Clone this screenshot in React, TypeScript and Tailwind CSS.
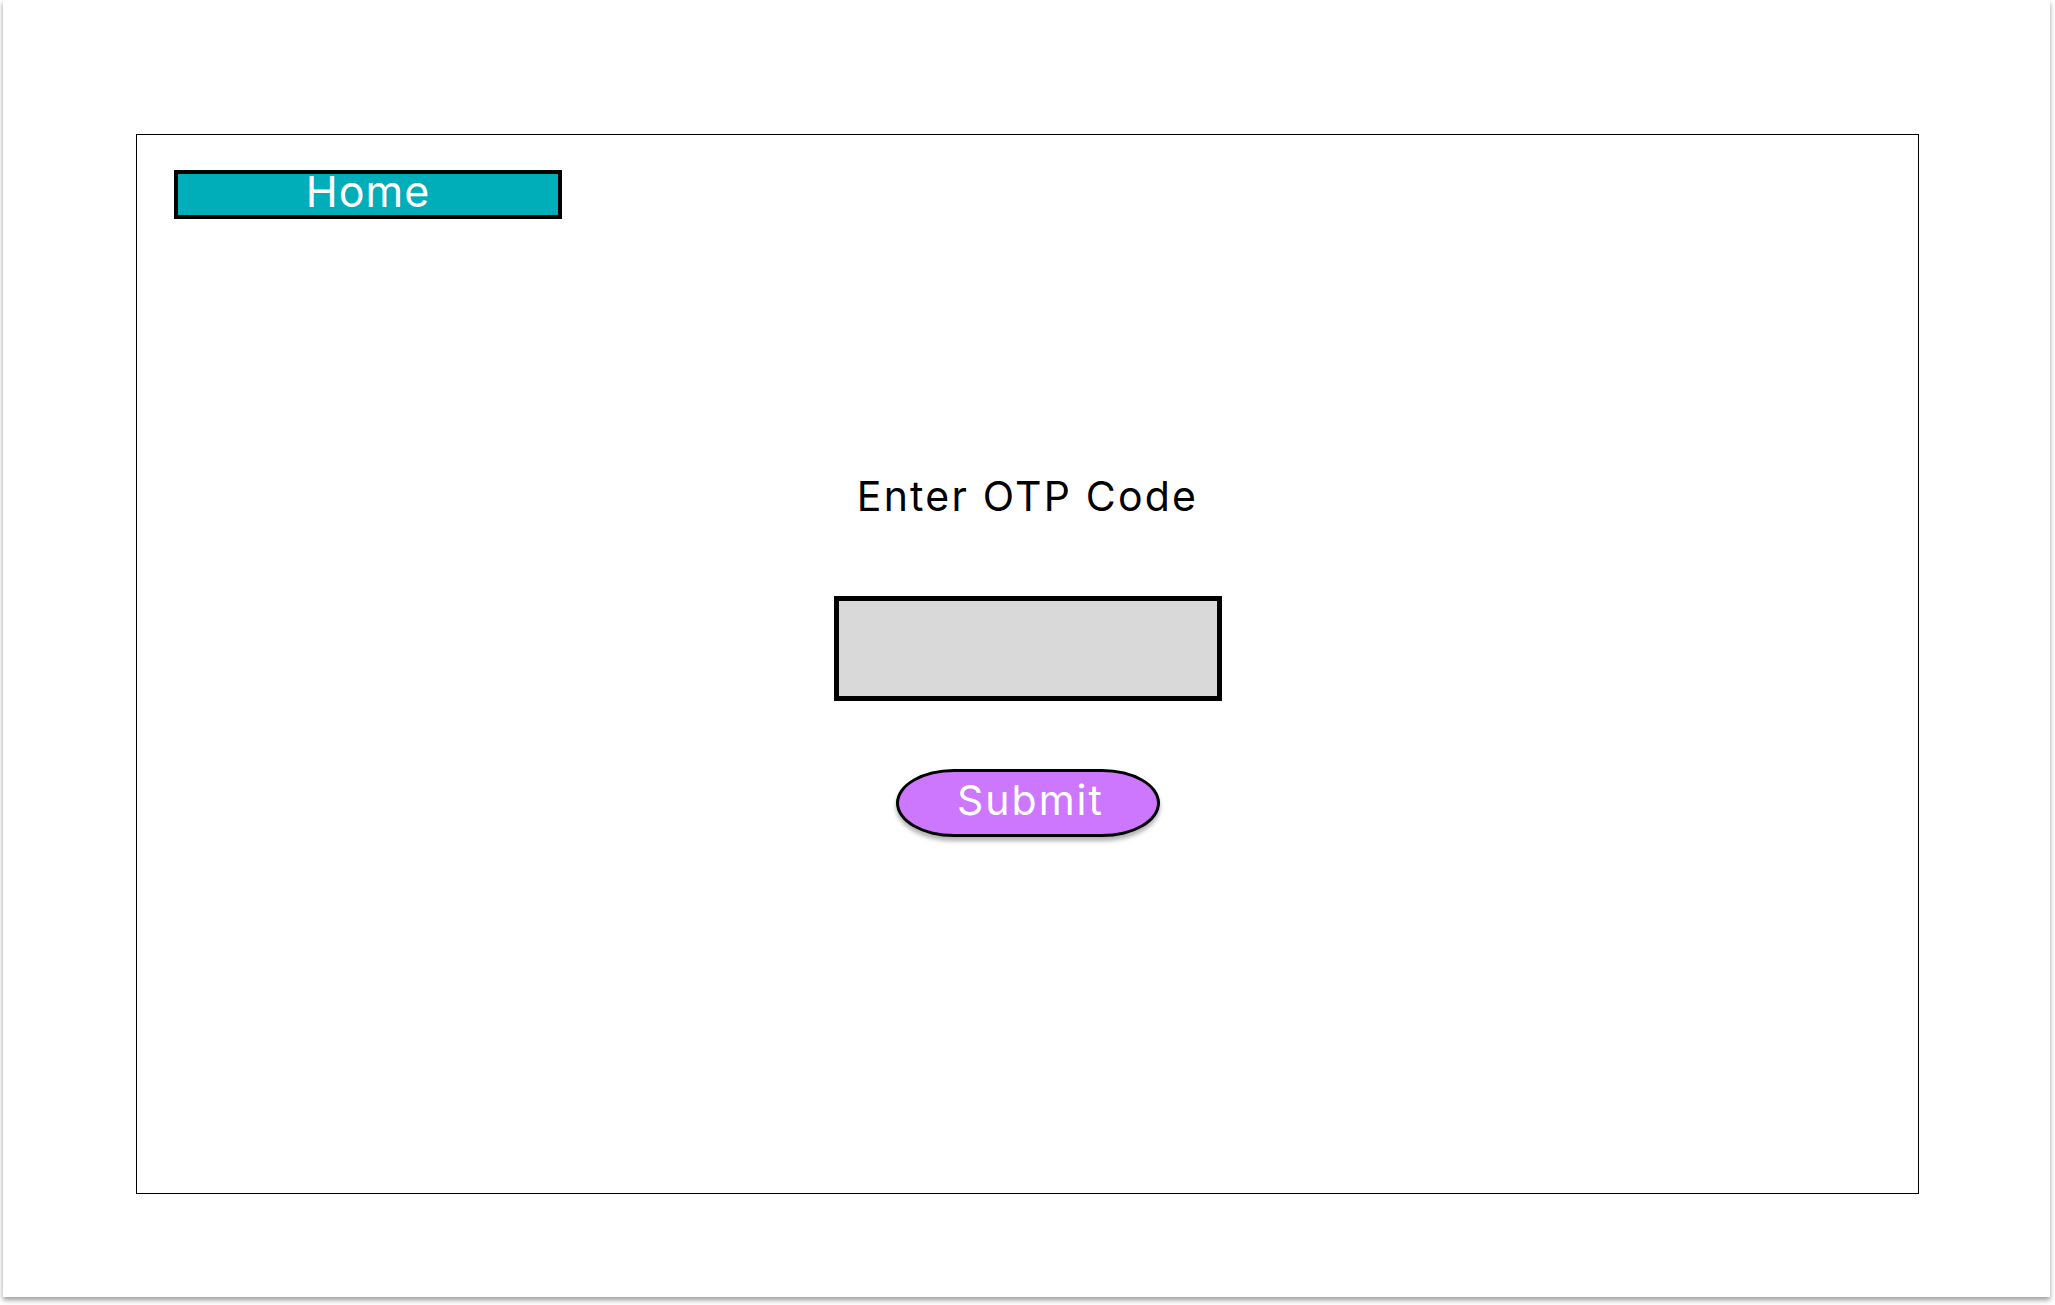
export default function App() {
    return (
        <div className="w-full h-[1305px] bg-white pl-[3px] pr-[5px] pb-[8px] font-['Inter','Liberation_Sans',sans-serif]">
            {/* page sheet */}
            <div className="h-full bg-white shadow-[0_3px_5px_rgba(0,0,0,0.4)] pt-[134px] pl-[133px] pr-[131px]">
                <div className="h-[1060px] border border-black flex flex-col pt-[35px] pl-[37px]">
                    <button className="w-[388px] h-[49px] border-4 border-black bg-[#00aeb9] text-white text-[43px] tracking-[1px] flex items-center justify-center pb-[6px]">
                        Home
                    </button>

                    <div className="flex flex-col items-center pr-[37px] mt-[253px]">
                        <h1 className="text-[41px] leading-[48px] tracking-[2.2px] text-black">Enter OTP Code</h1>
                        <input
                            type="text"
                            className="mt-[76px] w-[388px] h-[105px] border-[5px] border-black bg-[#d9d9d9] outline-none"
                        />
                        <button className="mt-[68px] w-[264px] h-[68px] rounded-[22%/50%] border-[3px] border-black bg-[#cd76fe] text-white text-[41px] tracking-[2px] flex items-center justify-center pb-[5px] pl-[6px] shadow-[0_4px_4px_rgba(0,0,0,0.3)]">
                            Submit
                        </button>
                    </div>
                </div>
            </div>
        </div>
    );
}
